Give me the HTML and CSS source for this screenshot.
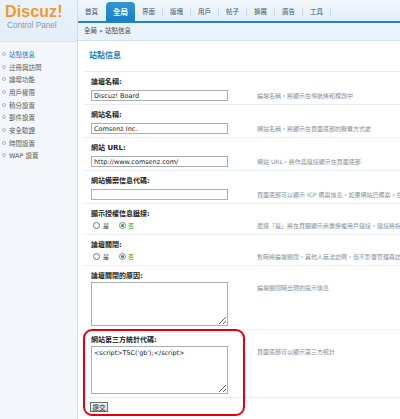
FILE: index.html
```html
<!DOCTYPE html>
<html lang="zh-Hant">
<head>
<meta charset="utf-8">
<title>Discuz! Control Panel</title>
<link rel="stylesheet" href="styles.css">
</head>
<body>
<div class="page">
  <aside class="side">
    <div class="logo">
      <div class="logo-name">Discuz!</div>
      <div class="logo-sub">Control Panel</div>
    </div>
    <ul class="menu">
      <li class="active">站點信息</li>
      <li>註冊與訪問</li>
      <li>論壇功能</li>
      <li>用戶權限</li>
      <li>積分設置</li>
      <li>郵件設置</li>
      <li>安全驗證</li>
      <li>時間設置</li>
      <li>WAP 設置</li>
    </ul>
  </aside>
  <main class="main">
    <nav class="nav">
      <span class="nav-item">首頁</span>
      <span class="nav-item active">全局</span>
      <span class="nav-item">界面</span><span class="sep"></span>
      <span class="nav-item">版塊</span><span class="sep"></span>
      <span class="nav-item">用戶</span><span class="sep"></span>
      <span class="nav-item">帖子</span><span class="sep"></span>
      <span class="nav-item">擴展</span><span class="sep"></span>
      <span class="nav-item">廣告</span><span class="sep"></span>
      <span class="nav-item">工具</span><span class="sep"></span>
    </nav>
    <div class="crumb">全局 » 站點信息</div>
    <h2 class="title">站點信息</h2>
    <div class="rows">
      <div class="row">
        <div class="label">論壇名稱:</div>
        <div class="field"><input class="text" type="text" value="Discuz! Board"></div>
        <div class="desc">論壇名稱，將顯示在導航條和標題中</div>
      </div>
      <div class="row">
        <div class="label">網站名稱:</div>
        <div class="field"><input class="text" type="text" value="Comsenz Inc."></div>
        <div class="desc">網站名稱，將顯示在頁面底部的聯繫方式處</div>
      </div>
      <div class="row">
        <div class="label">網站 URL:</div>
        <div class="field"><input class="text" type="text" value="http://www.comsenz.com/"></div>
        <div class="desc">網站 URL，將作爲鏈接顯示在頁面底部</div>
      </div>
      <div class="row">
        <div class="label">網站備案信息代碼:</div>
        <div class="field"><input class="text" type="text" value=""></div>
        <div class="desc">頁面底部可以顯示 ICP 備案信息，如果網站已備案，在此輸入您的授權碼</div>
      </div>
      <div class="row">
        <div class="label">顯示授權信息鏈接:</div>
        <div class="field radios"><span class="radio"></span><span class="rtext">是</span><span class="radio on"></span><span class="rtext on">否</span></div>
        <div class="desc desc-radio">選擇「是」將在頁腳顯示商業授權用戶鏈接，鏈接將指向</div>
      </div>
      <div class="row">
        <div class="label">論壇關閉:</div>
        <div class="field radios"><span class="radio"></span><span class="rtext">是</span><span class="radio on"></span><span class="rtext on">否</span></div>
        <div class="desc desc-radio">暫時將論壇關閉，其他人無法訪問，但不影響管理員訪問</div>
      </div>
      <div class="row">
        <div class="label">論壇關閉的原因:</div>
        <div class="field"><textarea class="area area-close"></textarea></div>
        <div class="desc desc-area">論壇關閉時出現的提示信息</div>
      </div>
      <div class="row">
        <div class="label">網站第三方統計代碼:</div>
        <div class="field"><textarea class="area area-stat">&lt;script&gt;TSC('gb');&lt;/script&gt;</textarea></div>
        <div class="desc desc-area">頁面底部可以顯示第三方統計</div>
      </div>
      <div class="submit-row">
        <button class="btn" type="button">提交</button>
      </div>
    </div>
  </main>
  <div class="mark"></div>
</div>
</body>
</html>
```

FILE: styles.css
```css
html, body {
  margin: 0;
  padding: 0;
  background: #ffffff;
}
body {
  width: 400px;
  height: 419px;
  overflow: hidden;
  font-family: "DejaVu Sans", "Noto Sans CJK TC", sans-serif;
  color: #333;
}
.page {
  position: relative;
  width: 400px;
  height: 419px;
  display: grid;
  grid-template-columns: 78px minmax(0, 1fr);
  overflow: hidden;
}

/* sidebar */
.side {
  box-sizing: border-box;
  background: #f3f7fb;
  border-right: 1px solid #cbdcec;
}
.logo {
  height: 41px;
  border-bottom: 1px solid #d4e3f0;
  background: linear-gradient(#eaf2f9, #e3eef7);
  padding-left: 5px;
  box-sizing: content-box;
}
.logo-name {
  padding-top: 3px;
  font-family: "Liberation Sans", sans-serif;
  font-weight: bold;
  font-size: 16px;
  line-height: 17px;
  color: #f5982a;
  letter-spacing: 0.1px;
}
.logo-sub {
  margin-top: 1px;
  font-family: "Liberation Sans", sans-serif;
  font-size: 8.2px;
  line-height: 10px;
  color: #7f9db6;
  padding-left: 2px;
}
.menu {
  list-style: none;
  margin: 0;
  padding: 5.6px 0 0 0;
}
.menu li {
  display: flex;
  align-items: center;
  padding-left: 2px;
  height: 12.67px;
  font-size: 6.5px;
  color: #5a5a5a;
  white-space: nowrap;
}
.menu li::before {
  content: "";
  width: 2px;
  height: 2px;
  border: 1px solid #a8bccd;
  border-radius: 50%;
  margin-right: 3px;
}
.menu li.active {
  color: #1f74b9;
}

/* main */
.main {
  min-width: 0;
}
.nav {
  display: flex;
  height: 21px;
  border-bottom: 2px solid #1c86c8;
  background: linear-gradient(#f1f7fc, #e2eef8);
  white-space: nowrap;
}
.nav-item {
  box-sizing: border-box;
  margin-top: 2px;
  height: 19px;
  padding: 2px 7px 0;
  line-height: 17px;
  font-size: 6.5px;
  color: #41546a;
}
.nav-item.active {
  margin-left: 1px;
  background: linear-gradient(#3594d3, #1c7fc3);
  color: #ffffff;
  font-weight: bold;
  font-size: 7.5px;
  border-radius: 4px 4px 0 0;
}
.sep {
  width: 1px;
  height: 9px;
  margin-top: 8px;
  background: #cbd9e6;
}
.crumb {
  height: 17px;
  line-height: 17px;
  padding-left: 6px;
  font-size: 6.5px;
  color: #444;
  background: linear-gradient(#eef5fb, #e9f2f9);
  border-bottom: 1px solid #d3e3f0;
  white-space: nowrap;
}
.title {
  margin: 0;
  padding-left: 11px;
  height: 30px;
  line-height: 30px;
  font-size: 8px;
  font-weight: bold;
  color: #1b7dc0;
}
.rows {
  margin-left: 6px;
}
.row {
  display: grid;
  grid-template-columns: 166px minmax(0, 1fr);
  border-top: 1px solid #eaeef2;
  padding: 4px 0 3px 7px;
}
.label {
  grid-column: 1 / 3;
  line-height: 12px;
  font-size: 7px;
  font-weight: bold;
  color: #222;
  white-space: nowrap;
}
.field {
  grid-column: 1;
}
.text {
  display: block;
  box-sizing: border-box;
  width: 137px;
  height: 11px;
  margin: 2px 0 0 0;
  padding: 0 2px;
  border: 1px solid #a9b0b6;
  font-family: "DejaVu Sans", sans-serif;
  font-size: 6.5px;
  color: #222;
  background: #fff;
  outline: none;
}
.desc {
  grid-column: 2;
  overflow: hidden;
  white-space: nowrap;
  margin-top: 2px;
  line-height: 11px;
  font-size: 6px;
  color: #8d8d8d;
}
.desc-radio,
.desc-area {
  margin-top: 0;
}
.radios {
  display: flex;
  align-items: center;
  height: 11px;
  padding-left: 2px;
}
.radio {
  box-sizing: border-box;
  width: 7px;
  height: 7px;
  border: 1px solid #5a7a98;
  border-radius: 50%;
  background: #fff;
  margin-right: 3px;
  display: flex;
  align-items: center;
  justify-content: center;
}
.radio.on {
  border-color: #7a8a96;
  margin-right: 2px;
}
.radio.on::after {
  content: "";
  width: 3px;
  height: 3px;
  border-radius: 50%;
  background: #2f9a2f;
}
.rtext {
  font-size: 6px;
  line-height: 11px;
  color: #333;
  margin-right: 10px;
}
.rtext.on {
  color: #2f9a2f;
}
.area {
  display: block;
  box-sizing: border-box;
  width: 137px;
  margin: 0;
  padding: 2px;
  border: 1px solid #a9b0b6;
  font-family: "DejaVu Sans", sans-serif;
  font-size: 6.4px;
  line-height: 9px;
  color: #222;
  background: #fff;
  outline: none;
}
.area-close {
  height: 44px;
}
.area-stat {
  height: 48px;
}
.submit-row {
  border-top: 1px solid #eaeef2;
  padding: 4px 0 0 6px;
}
.btn {
  display: block;
  box-sizing: border-box;
  width: 18px;
  height: 10px;
  padding: 0;
  margin: 0;
  border: 1px solid #6d6d6d;
  background: linear-gradient(#f4f4f4, #dedede);
  font-family: "Noto Sans CJK TC", sans-serif;
  font-size: 6.5px;
  line-height: 8px;
  color: #111;
}

/* annotation overlay */
.mark {
  position: absolute;
  left: 83px;
  top: 329px;
  width: 162px;
  height: 87px;
  box-sizing: border-box;
  border: 2px solid #e6000b;
  border-radius: 9px;
  pointer-events: none;
}
```
